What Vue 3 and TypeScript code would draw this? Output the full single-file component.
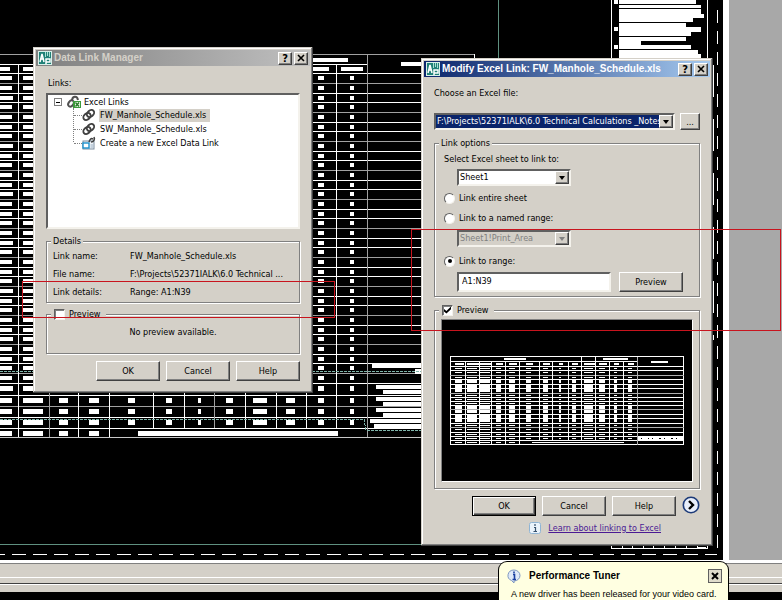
<script setup lang="ts">
import { ref } from 'vue'

interface Box { x: number; y: number; w: number; h: number }
interface Line { x1: number; y1: number; x2: number; y2: number; tone: string }

const bright = '#ffffff'
const dim = '#a0a0a0'

// Row rules of the schedule table, top to bottom
const rowRules: number[] = []
for (let i = 0; i <= 32; i++) rowRules.push(Math.round(73.4 + i * 9.66))
rowRules.push(395, 406, 417, 428)

const columnRules = [18, 49, 78, 109, 153, 184, 214, 245, 276, 306, 336, 367]
const textColumns = [
  { x: 0, w: 12 }, { x: 23, w: 20 }, { x: 59, w: 9 }, { x: 89, w: 10 }, { x: 128, w: 7 }, { x: 166, w: 6 },
  { x: 198, w: 3 }, { x: 226, w: 7 }, { x: 253, w: 14 }, { x: 286, w: 9 }, { x: 318, w: 6 }, { x: 350, w: 4 }
]

const tableLines: Line[] = [
  { x1: 0, y1: 54, x2: 474, y2: 54, tone: dim },
  { x1: 0, y1: 64, x2: 367, y2: 64, tone: bright },
  { x1: 0, y1: 437, x2: 421, y2: 437, tone: '#c8c8c8' },
  { x1: 474, y1: 54, x2: 474, y2: 60, tone: bright }
]
rowRules.forEach((y, i) => {
  tableLines.push({ x1: 0, y1: y, x2: 474, y2: y, tone: i % 3 === 1 ? dim : bright })
})
columnRules.forEach((x, i) => {
  const full = i < 4 || i === 11
  tableLines.push({ x1: x, y1: i === 11 ? 54 : 64, x2: x, y2: full ? 437 : 428, tone: i % 5 === 1 ? dim : bright })
})

const tableBoxes: Box[] = []
rowRules.forEach((y, r) => {
  textColumns.forEach((c, i) => {
    if (r === rowRules.length - 1 && i > 3) return
    const jitter = i < 2 ? (r % 5 === 2 ? 1 : 0) : 0
    tableBoxes.push({ x: c.x, y: y + 3, w: c.w + jitter, h: r > 31 ? 5 : 4 })
  })
})
tableBoxes.push(
  { x: 138, y: 431, w: 200, h: 5 },
  { x: 300, y: 58, w: 48, h: 4 },
  { x: 0, y: 67, w: 10, h: 4 },
  { x: 23, y: 67, w: 20, h: 4 },
  { x: 305, y: 67, w: 24, h: 4 },
  { x: 341, y: 67, w: 22, h: 4 },
  { x: 401, y: 62, w: 30, h: 4 },
  { x: 372, y: 364, w: 60, h: 4 },
  { x: 415, y: 369, w: 10, h: 5 },
  { x: 376, y: 385, w: 50, h: 4 },
  { x: 383, y: 390, w: 50, h: 4 },
  { x: 376, y: 397, w: 50, h: 4 },
  { x: 383, y: 402, w: 50, h: 4 },
  { x: 376, y: 408, w: 50, h: 4 },
  { x: 383, y: 413, w: 50, h: 4 },
  { x: 370, y: 419, w: 60, h: 4 },
  { x: 374, y: 424, w: 50, h: 4 }
)

// Notes block at the upper right of the sheet
const noteBoxes: Box[] = [
  { x: 619, y: 0, w: 77, h: 4 }, { x: 619, y: 5, w: 82, h: 3 }, { x: 619, y: 9, w: 82, h: 5 },
  { x: 619, y: 14, w: 85, h: 4 }, { x: 619, y: 18, w: 74, h: 4 }, { x: 619, y: 23, w: 67, h: 4 },
  { x: 619, y: 27, w: 82, h: 5 }, { x: 619, y: 32, w: 72, h: 4 }, { x: 619, y: 37, w: 67, h: 4 },
  { x: 619, y: 41, w: 22, h: 4 }, { x: 619, y: 45, w: 72, h: 4 }, { x: 619, y: 50, w: 79, h: 4 },
  { x: 619, y: 54, w: 82, h: 6 },
  { x: 614, y: 0, w: 4, h: 4 }, { x: 614, y: 27, w: 4, h: 4 }, { x: 614, y: 45, w: 4, h: 4 }
]
const footerTicks = [611, 622, 632, 643, 653, 664, 675, 686, 697, 707]

// Thumbnail of the linked range
const thumbColumns = [22, 36, 49, 63, 77, 97, 110, 126, 139, 153, 167, 181, 195]
const thumbText = [
  { x: 12, w: 7 }, { x: 24, w: 10 }, { x: 37, w: 11 }, { x: 54, w: 5 }, { x: 67, w: 6 }, { x: 84, w: 5 }, { x: 101, w: 5 },
  { x: 117, w: 2 }, { x: 130, w: 4 }, { x: 142, w: 9 }, { x: 157, w: 6 }, { x: 172, w: 3 }, { x: 186, w: 4 }
]
const thumbRows: { y: number; tone: string; bold: boolean }[] = []
for (let i = 0; i < 18; i++) {
  thumbRows.push({ y: Math.round(46 + i * 4.44), tone: i % 4 === 2 ? '#b0b0b0' : bright, bold: (i > 2 && i < 6) || (i > 8 && i < 13) })
}

const links = [
  { name: 'FW_Manhole_Schedule.xls', icon: 'chain' },
  { name: 'SW_Manhole_Schedule.xls', icon: 'chain' },
  { name: 'Create a new Excel Data Link', icon: 'new' }
]
const selected = ref(0)
const details = [
  { label: 'Link name:', value: 'FW_Manhole_Schedule.xls' },
  { label: 'File name:', value: 'F:\\Projects\\52371IALK\\6.0 Technical ...' },
  { label: 'Link details:', value: 'Range: A1:N39' }
]
const managerPreview = ref(false)
const linkPreview = ref(true)
const mode = ref('range')
const range = ref('A1:N39')
</script>

<template>
  <main class="desktop">
    <div class="workspace">
      <svg class="sheet" aria-hidden="true" shape-rendering="crispEdges">
        <g fill="none" stroke="#5f9080">
          <path d="M498.5 0V544.5H0" />
        </g>
        <line v-for="(l, i) in tableLines" :key="'l' + i" :x1="l.x1 + (l.x1 === l.x2 ? 0.5 : 0)" :x2="l.x2 + (l.x1 === l.x2 ? 0.5 : 0)" :y1="l.y1 + (l.y1 === l.y2 ? 0.5 : 0)" :y2="l.y2 + (l.y1 === l.y2 ? 0.5 : 0)" :stroke="l.tone" />
        <rect v-for="(b, i) in tableBoxes" :key="'b' + i" :x="b.x" :y="b.y" :width="b.w" :height="b.h" fill="#fff" />
        <g fill="none" stroke="#7fb5aa" stroke-dasharray="3 1">
          <path d="M0 371.5H421M0 419.5H364L366 430.5H421" />
        </g>
        <rect v-for="(b, i) in noteBoxes" :key="'n' + i" :x="b.x" :y="b.y" :width="b.w" :height="b.h" fill="#fff" />
        <g fill="none" stroke="#fff">
          <path d="M611.5 0V549M707.5 0V60M611 548.5H708" />
          <path v-for="x in footerTicks" :key="x" :d="`M${x + 0.5} 545V549`" />
          <path d="M697 547.5H706" />
          <path d="M713.5 65V340" stroke-dasharray="32 22" />
          <path d="M0 554.5H717" stroke-dasharray="14 7" stroke-dashoffset="9" />
          <path d="M717.5 10V555" stroke-dasharray="13 8" />
        </g>
      </svg>
      <div class="margin"></div>
    </div>
    <div class="edge"></div>
    <div class="bar bar-upper"></div>
    <div class="bar bar-lower"></div>
    <div class="taskbar"></div>

    <section class="dialog manager" aria-labelledby="manager-title">
      <header class="title inactive">
        <svg class="app" viewBox="0 0 14 14" aria-hidden="true"><rect width="14" height="14" fill="#d8f0ea" /><rect x="1" y="1" width="12" height="12" fill="#1f8077" /><path d="M2 11L4 3L6 11M3 8H6" fill="none" stroke="#fff" stroke-width="1.500" /><path d="M7.500 1V6M9.500 1V5M11.500 1V6" stroke="#a8ded2" /><path d="M8 13V8H12V11H8" fill="none" stroke="#fff" stroke-width="1.500" /></svg>
        <h2 id="manager-title">Data Link Manager</h2>
        <button class="cap" type="button" aria-label="Help"><span>?</span></button>
        <button class="cap" type="button" aria-label="Close"><svg viewBox="0 0 8 8"><path d="M1 1L7 7M7 1L1 7" stroke="#000" stroke-width="1.600" /></svg></button>
      </header>
      <div class="body">
        <p class="caption links-caption">Links:</p>
        <div class="tree">
          <div class="root">
            <svg class="expander" viewBox="0 0 8 8" aria-hidden="true" shape-rendering="crispEdges"><rect x="0.500" y="0.500" width="7" height="7" fill="#fff" stroke="#808080" /><path d="M2 4.500H6" stroke="#000" /></svg>
            <svg class="glyph" viewBox="0 0 14 14" aria-hidden="true"><g fill="none" stroke="#505050" stroke-width="2"><ellipse cx="4" cy="8.500" rx="2.400" ry="3.400" transform="rotate(35 4 8.500)" /><path d="M5 6C5 1 10 0 11 5" /></g><rect x="6" y="6" width="8" height="7" fill="#3c9a3c" /><rect x="8" y="7" width="5" height="5" fill="#e4f5e0" /><path d="M8.500 7.500L12 11.500M12 7.500L8.500 11.500" stroke="#257a25" stroke-width="1.300" /></svg>
            <span>Excel Links</span>
          </div>
          <ul>
            <li v-for="(l, i) in links" :key="l.name">
              <svg v-if="l.icon === 'chain'" class="glyph" viewBox="0 0 14 14" aria-hidden="true"><g fill="none" stroke="#404040" stroke-width="1.900"><ellipse cx="5" cy="8.500" rx="4" ry="3" transform="rotate(-40 5 8.500)" /><ellipse cx="8.500" cy="5.500" rx="4" ry="3" transform="rotate(-40 8.500 5.500)" /></g></svg>
              <svg v-else class="glyph" viewBox="0 0 14 14" aria-hidden="true"><rect x="1" y="5" width="11" height="8" fill="#eef3f8" stroke="#7c8ea0" /><rect x="1" y="7" width="6" height="5" fill="#fff" stroke="#1c90cc" stroke-width="1.400" /><path d="M8.500 9H11M8.500 11H11" stroke="#9ab0c4" /><path d="M7 6C8 3 9 2 11 3M9 6C12 6 13 3 12 1" fill="none" stroke="#404040" stroke-width="1.600" /></svg>
              <button type="button" class="node" :class="{ selected: selected === i }" @click="selected = i">{{ l.name }}</button>
            </li>
          </ul>
        </div>
        <fieldset class="details">
          <legend>Details</legend>
          <dl>
            <template v-for="d in details" :key="d.label">
              <dt>{{ d.label }}</dt>
              <dd>{{ d.value }}</dd>
            </template>
          </dl>
        </fieldset>
        <fieldset class="no-preview">
          <legend class="wide"><label><input v-model="managerPreview" type="checkbox">Preview</label></legend>
          <p>No preview available.</p>
        </fieldset>
        <div class="actions">
          <button class="push" type="button">OK</button>
          <button class="push" type="button">Cancel</button>
          <button class="push" type="button">Help</button>
        </div>
      </div>
    </section>

    <section class="dialog modify" aria-labelledby="modify-title">
      <header class="title">
        <svg class="app" viewBox="0 0 14 14" aria-hidden="true"><rect width="14" height="14" fill="#d8f0ea" /><rect x="1" y="1" width="12" height="12" fill="#1f8077" /><path d="M2 11L4 3L6 11M3 8H6" fill="none" stroke="#fff" stroke-width="1.500" /><path d="M7.500 1V6M9.500 1V5M11.500 1V6" stroke="#a8ded2" /><path d="M8 13V8H12V11H8" fill="none" stroke="#fff" stroke-width="1.500" /></svg>
        <h2 id="modify-title">Modify Excel Link: FW_Manhole_Schedule.xls</h2>
        <button class="cap" type="button" aria-label="Help"><span>?</span></button>
        <button class="cap" type="button" aria-label="Close"><svg viewBox="0 0 8 8"><path d="M1 1L7 7M7 1L1 7" stroke="#000" stroke-width="1.600" /></svg></button>
      </header>
      <div class="body">
        <label class="caption file-caption" for="file">Choose an Excel file:</label>
        <div class="file-row">
          <div class="combo file">
            <select id="file"><option>F:\Projects\52371IALK\6.0 Technical Calculations _Notes</option></select>
            <span class="arrow" aria-hidden="true"></span>
          </div>
          <button class="push browse" type="button" aria-label="Browse">...</button>
        </div>
        <fieldset class="options">
          <legend>Link options</legend>
          <div class="option-list">
            <label class="line" for="sheet">Select Excel sheet to link to:</label>
            <div class="combo indent">
              <select id="sheet"><option>Sheet1</option></select>
              <span class="arrow" aria-hidden="true"></span>
            </div>
            <label class="line entire"><input v-model="mode" type="radio" value="sheet">Link entire sheet</label>
            <label class="line named"><input v-model="mode" type="radio" value="named">Link to a named range:</label>
            <div class="combo indent off">
              <select aria-label="Named range" disabled><option>Sheet1!Print_Area</option></select>
              <span class="arrow" aria-hidden="true"></span>
            </div>
            <label class="line by-range"><input v-model="mode" type="radio" value="range">Link to range:</label>
            <div class="range-row">
              <input v-model="range" type="text" aria-label="Range">
              <button class="push" type="button">Preview</button>
            </div>
          </div>
        </fieldset>
        <fieldset class="preview">
          <legend class="wide"><label><input v-model="linkPreview" type="checkbox">Preview</label></legend>
          <div class="thumb">
            <svg v-if="linkPreview" viewBox="0 0 250 162" aria-hidden="true" shape-rendering="crispEdges">
              <g fill="none" stroke="#fff">
                <rect x="7.500" y="36.500" width="235" height="89" />
                <path d="M7 41.500H195M7 46.500H243M139.500 37V42M153.500 37V42" />
                <path v-for="r in thumbRows" :key="'r' + r.y" :d="`M7 ${r.y + 0.5}H243`" :stroke="r.tone" />
                <path v-for="(x, i) in thumbColumns" :key="'c' + x" :d="`M${x + 0.5} ${i === 12 ? 37 : 42}V${i < 5 || i === 12 ? 126 : 122}`" :stroke="i === 12 ? '#b0b0b0' : '#fff'" />
              </g>
              <g fill="#fff">
                <template v-for="(r, k) in thumbRows" :key="'t' + k">
                  <template v-for="(c, j) in thumbText" :key="j">
                    <rect v-if="k < 17 || j < 5" :x="c.x" :y="r.y + (r.bold ? 1 : 2)" :width="c.w" :height="r.bold ? 3 : 1" />
                  </template>
                </template>
                <rect v-for="(c, j) in thumbText" :key="'h' + j" :x="c.x" y="43" :width="c.w + 2" height="2" />
                <rect x="62" y="38" width="22" height="2" />
                <rect x="161" y="38" width="25" height="2" />
                <rect x="210" y="41" width="17" height="2" />
                <rect x="196" y="117" width="46" height="4" />
                <rect x="90" y="123" width="92" height="1" />
              </g>
              <path d="M199 119.500H240" stroke="#000" stroke-dasharray="1 6 2 3" />
            </svg>
          </div>
        </fieldset>
        <div class="actions">
          <button class="push default" type="button">OK</button>
          <button class="push" type="button">Cancel</button>
          <button class="push" type="button">Help</button>
          <button class="more" type="button" aria-label="More options"><svg viewBox="0 0 18 18"><circle cx="9" cy="9" r="7.700" fill="#e8eefa" stroke="#1c3a78" stroke-width="1.600" /><path d="M7 5L11 9L7 13" fill="none" stroke="#000" stroke-width="2.400" /></svg></button>
        </div>
        <div class="learn">
          <svg viewBox="0 0 12 12" aria-hidden="true"><rect x="0.500" y="0.500" width="11" height="11" rx="2" fill="#eaf3fb" stroke="#8fb4d4" /><path d="M6 2V4M5 5.500H6.500V9M4.500 9.500H8" fill="none" stroke="#35506c" stroke-width="1.200" /></svg>
          <a href="#learn">Learn about linking to Excel</a>
        </div>
      </div>
    </section>

    <aside class="balloon">
      <header>
        <svg viewBox="0 0 14 14" aria-hidden="true"><path d="M7 1A6 5.500 0 0 1 7 12L7 14L4.500 11.500A6 5.500 0 0 1 7 1Z" fill="#dfe9f8" stroke="#7f98c0" /><path d="M7 2.500V4.300M6 5.500H7.500V10M5.500 10.500H9" fill="none" stroke="#1a3fa0" stroke-width="1.600" /></svg>
        <h2>Performance Tuner</h2>
        <button type="button" aria-label="Close"><svg viewBox="0 0 8 8"><path d="M1 1L7 7M7 1L1 7" stroke="#000" stroke-width="2" /></svg></button>
      </header>
      <p>A new driver has been released for your video card.</p>
    </aside>

    <div class="markup left" aria-hidden="true"></div>
    <div class="markup right" aria-hidden="true"></div>
  </main>
</template>

<style>
body { background: #000; overflow: hidden; }
</style>

<style scoped>
.desktop {
  --face: #d4d0c8;
  position: relative;
  display: flex;
  flex-direction: column;
  height: 100vh;
  overflow: hidden;
  color: #000;
  font: 9px/14px "DejaVu Sans Condensed", "Noto Sans", sans-serif;
}
.workspace { flex: 1; min-height: 0; display: flex; background: #000; }
.sheet { flex: 1; min-width: 0; height: 100%; }
.margin { width: 53px; background: #a8a8a8; border-left: 6px solid #fff; }
.edge { height: 3px; background: #fff; }
.bar { background: var(--face); }
.bar-upper { height: 13px; border-top: 1px solid #808080; border-bottom: 1px solid #fff; }
.bar-lower { height: 7px; border-top: 1px solid #fff; box-shadow: 0 -1px 0 #404040; margin-top: 6px; position: relative; }
.bar-lower::before { content: ""; position: absolute; left: 0; right: 0; top: -7px; height: 5px; background: var(--face); }
.taskbar { height: 8px; background: #000; }

h2, p, dl, dd, ul { margin: 0; padding: 0; }
button, input, select { font: inherit; color: inherit; margin: 0; padding: 0; border-radius: 0; }

.dialog {
  position: absolute;
  box-sizing: border-box;
  padding: 3px;
  background: var(--face);
  box-shadow: inset -1px -1px 0 #404040, inset 1px 1px 0 var(--face), inset -2px -2px 0 #808080, inset 2px 2px 0 #fff;
}
.manager { left: 33px; top: 47px; width: 280px; }
.modify { left: 421px; top: 58px; width: 292px; }
.body { padding: 0 10px; }

.title {
  display: flex;
  align-items: center;
  height: 16px;
  padding: 0 2px;
  gap: 2px;
  background: linear-gradient(90deg, #0a246a, #a6caf0);
  color: #fff;
}
.title.inactive { background: linear-gradient(90deg, #808080, #c0c0c0); color: var(--face); }
.title h2 { flex: 1; font: bold 10px/14px "Liberation Sans", sans-serif; white-space: nowrap; }
.app { width: 14px; height: 14px; }

.cap, .push, .arrow {
  background: var(--face);
  border: 1px solid;
  border-color: #fff #404040 #404040 #fff;
  box-shadow: inset -1px -1px 0 #808080;
}
.cap {
  display: grid;
  place-items: center;
  width: 14px;
  height: 13px;
  color: #000;
  font-weight: bold;
  font-size: 11px;
  line-height: 11px;
}
.cap svg { width: 8px; height: 8px; }
.push { width: 64px; height: 20px; text-align: center; line-height: 14px; }
.push.default { border-color: #000; box-shadow: inset 1px 1px 0 #fff, inset -1px -1px 0 #404040, inset -2px -2px 0 #808080; }

.caption { display: block; line-height: 14px; }
.links-caption { padding: 10px 0 3px 2px; }
.tree {
  box-sizing: border-box;
  height: 136px;
  padding-left: 6px;
  background: #fff;
  border: 2px solid;
  border-color: #606060 #f4f2ec #f4f2ec #606060;
}
.root { display: flex; align-items: center; height: 13px; }
.expander { width: 8px; height: 8px; margin-right: 5px; }
.glyph { width: 14px; height: 14px; flex: none; }
.root span { padding-left: 3px; }
.tree ul { list-style: none; margin-left: 19px; border-left: 1px dotted #808080; height: 34px; }
.tree li { display: flex; align-items: center; height: 14px; }
.tree li::before { content: ""; width: 8px; border-top: 1px dotted #808080; }
.node { margin-left: 3px; padding: 0 4px 0 1px; height: 13px; line-height: 13px; background: none; border: 0; white-space: nowrap; }
.node.selected { background: var(--face); }

fieldset {
  min-width: 0;
  margin: 0;
  padding: 0 6px;
  border: 1px solid #808080;
  box-shadow: 1px 1px 0 #fff, inset 1px 1px 0 #fff;
}
legend { margin-left: -2px; padding: 0 2px; line-height: 12px; height: 12px; background: var(--face); }
legend.wide { padding-right: 6px; }
legend label { display: flex; align-items: center; gap: 4px; padding-left: 1px; height: 12px; }
.details { margin-top: 6px; padding-bottom: 1px; }
dl { display: grid; grid-template-columns: 77px 1fr; line-height: 18px; white-space: nowrap; }
.no-preview { margin-top: 5px; padding-bottom: 14px; }
.no-preview p { margin-top: 5px; text-align: center; line-height: 14px; }

input[type="checkbox"] {
  appearance: none;
  display: grid;
  place-items: center;
  box-sizing: border-box;
  width: 11px;
  height: 11px;
  background: #fff;
  border: 1px solid;
  border-color: #606060 #f4f2ec #f4f2ec #606060;
  box-shadow: inset 1px 1px 0 #808080;
}
input[type="checkbox"]:checked::after {
  content: "";
  width: 7px;
  height: 7px;
  background: #000;
  clip-path: polygon(0 35%, 35% 65%, 100% 0, 100% 38%, 35% 100%, 0 72%);
}
input[type="radio"] {
  appearance: none;
  display: grid;
  place-items: center;
  box-sizing: border-box;
  width: 11px;
  height: 11px;
  background: #fff;
  border: 1px solid;
  border-color: #606060 #f4f2ec #f4f2ec #606060;
  border-radius: 50%;
}
input[type="radio"]:checked::after { content: ""; width: 4px; height: 4px; border-radius: 50%; background: #000; }

.actions { display: flex; justify-content: flex-end; gap: 6px; }
.manager .actions { margin: 7px 0 9px; }
.modify .actions { margin-top: 7px; }

.file-caption { padding: 9px 0 13px; }
.file-row { display: flex; gap: 5px; }
.browse { width: 20px; height: 17px; line-height: 12px; }
.combo {
  display: grid;
  box-sizing: border-box;
  height: 17px;
  background: #fff;
  border: 2px solid;
  border-color: #606060 #f4f2ec #f4f2ec #606060;
}
.combo > * { grid-area: 1 / 1; }
.combo select { appearance: none; width: 100%; height: 13px; padding: 0 14px 0 1px; border: 0; background: #fff; line-height: 13px; overflow: hidden; }
.combo.file { flex: 1; min-width: 0; }
.combo.file select { background: #0a246a; color: #fff; }
.arrow { justify-self: end; display: grid; place-items: center; box-sizing: border-box; width: 14px; height: 13px; pointer-events: none; }
.arrow::after { content: ""; border: 3px solid transparent; border-top: 4px solid #000; border-bottom: 0; }
.combo.off select { background: var(--face); color: #808080; opacity: 1; }
.off .arrow::after { border-top-color: #808080; }
.indent { width: 114px; margin-left: 13px; }

.options { margin-top: 7px; padding-bottom: 4px; }
.option-list { display: flex; flex-direction: column; padding: 3px 3px 0; }
.line { display: flex; align-items: center; gap: 4px; height: 14px; margin-bottom: 3px; }
.line.entire { margin: 5px 0 6px; }
.line.named { margin: 0 0 5px; }
.line.by-range { margin: 7px 0 4px; }
.range-row { display: flex; gap: 8px; margin-left: 13px; }
.range-row input {
  flex: 0 1 154px;
  min-width: 0;
  box-sizing: border-box;
  height: 20px;
  padding: 0 3px 2px;
  background: #fff;
  border: 2px solid;
  border-color: #606060 #f4f2ec #f4f2ec #606060;
}
.preview { margin-top: 7px; padding-bottom: 6px; }
.thumb {
  box-sizing: border-box;
  height: 163px;
  margin-top: 3px;
  background: #000;
  border: 1px solid;
  border-color: #808080 #fff #fff #808080;
}
.thumb svg { display: block; width: 100%; height: 100%; }
.more { width: 18px; height: 18px; background: none; border: 0; }
.more svg { display: block; width: 18px; height: 18px; }
.learn { display: flex; align-items: center; justify-content: flex-end; gap: 7px; height: 16px; margin-top: 4px; padding: 0 39px 7px 0; }
.learn svg { width: 12px; height: 12px; }
.learn a { color: #4b1a94; }

.balloon {
  position: absolute;
  right: 53px;
  bottom: 0;
  box-sizing: border-box;
  width: 231px;
  height: 39px;
  padding: 7px 6px 0 8px;
  background: #ffffe1;
  border: 1px solid #000;
  border-bottom: 0;
  border-radius: 9px 9px 0 0;
  font-family: "Liberation Sans", sans-serif;
}
.balloon header { display: flex; align-items: center; height: 14px; }
.balloon header svg { width: 14px; height: 14px; }
.balloon h2 { flex: 1; margin-left: 8px; font-size: 10px; line-height: 14px; }
.balloon button { display: grid; place-items: center; box-sizing: border-box; width: 14px; height: 14px; background: #e0dccc; border: 1px solid #606060; }
.balloon button svg { width: 8px; height: 8px; }
.balloon p { margin: 5px 0 0 4px; font-size: 9px; line-height: 12px; white-space: nowrap; }

.markup { position: absolute; box-sizing: border-box; border: 1px solid #c8141e; pointer-events: none; }
.markup.left { left: 22px; top: 281px; width: 313px; height: 37px; }
.markup.right { left: 411px; top: 229px; width: 370px; height: 102px; }
</style>
